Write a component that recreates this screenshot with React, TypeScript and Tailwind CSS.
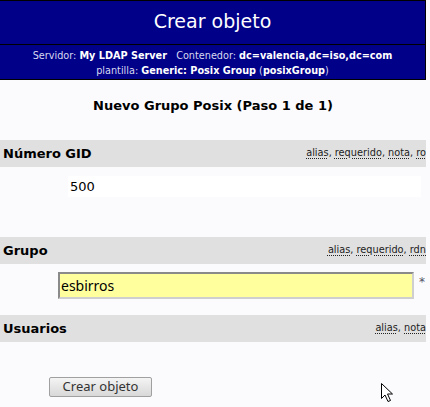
import React from "react";

const FONT = { fontFamily: '"DejaVu Sans", Verdana, sans-serif' };

const Links = ({ items }: { items: string[] }) => (
  <span className="ml-auto shrink-0 whitespace-nowrap text-[9.75px] font-normal text-[#222]">
    {items.map((it, i) => (
      <span key={i}>
        <span className="underline decoration-dotted underline-offset-2">{it}</span>
        {i < items.length - 1 ? ", " : ""}
      </span>
    ))}
  </span>
);

const Bar = ({ label, links }: { label: string; links: string[] }) => (
  <div className="flex h-[27px] w-[426px] items-center overflow-hidden bg-[#e0e0e0] pl-[3px]">
    <span className="whitespace-nowrap text-[13px] font-bold text-black">{label}</span>
    <Links items={links} />
  </div>
);

const Cursor = () => (
  <svg
    className="absolute left-[380px] top-[382px]"
    width="14"
    height="22"
    viewBox="0 0 14 22"
  >
    <path
      d="M1.5 1.5 L1.5 16.5 L5 13 L8 19.5 L10.5 18.5 L7.5 12 L12.5 12 Z"
      fill="#fff"
      stroke="#000"
      strokeWidth="1"
      strokeLinejoin="round"
    />
  </svg>
);

export default function App() {
  return (
    <div className="relative h-[407px] w-[430px] overflow-hidden bg-[#fbfbfe]" style={FONT}>
      <div className="w-[426px]">
        {/* header */}
        <div className="border-b border-r border-t border-black bg-[#000088] text-white">
          <div className="flex h-[44px] items-center justify-center border-b border-black pb-[2px] text-[19px]">
            Crear objeto
          </div>
          <div className="flex h-[34px] flex-col items-center justify-center pt-[2px] text-[9.7px] leading-[15px]">
            <div className="whitespace-nowrap">
              <span className="text-[#d8d8f0]">Servidor: </span>
              <b>My LDAP Server</b>
              <span className="text-[#d8d8f0]">&nbsp;&nbsp; Contenedor: </span>
              <b>dc=valencia,dc=iso,dc=com</b>
            </div>
            <div className="whitespace-nowrap">
              <span className="text-[#d8d8f0]">plantilla: </span>
              <b>Generic: Posix Group</b>
              <span className="text-[#d8d8f0]"> (</span>
              <b>posixGroup</b>
              <span className="text-[#d8d8f0]">)</span>
            </div>
          </div>
        </div>

        <div className="h-[60px] pt-[18px] text-center text-[13px] font-bold leading-[16px] text-black">
          Nuevo Grupo Posix (Paso 1 de 1)
        </div>

        <Bar label="Número GID" links={["alias", "requerido", "nota", "ro"]} />
        <div className="mt-[9px] ml-[68px] flex h-[21px] w-[353px] items-center bg-white pl-[2px] text-[13px] text-black">
          500
        </div>

        <div className="h-[40px]" />
        <Bar label="Grupo" links={["alias", "requerido", "rdn"]} />
        <div className="mt-[8px] flex items-start">
          <div
            className="ml-[58px] flex h-[27px] w-[356px] items-center border-2 border-b-[#cfcfcf] border-l-[#8a8a8a] border-r-[#cfcfcf] border-t-[#8a8a8a] bg-[#ffff9e] pl-[1px] text-[14px] text-black"
            style={{ fontFamily: '"Noto Sans", "Open Sans", sans-serif' }}
          >
            esbirros
          </div>
          <span className="ml-[5px] mt-[1px] text-[12px] text-[#556]">*</span>
        </div>

        <div className="h-[16px]" />
        <Bar label="Usuarios" links={["alias", "nota"]} />

        <div className="ml-[49px] mt-[35px]">
          <button
            className="flex h-[20px] w-[103px] items-center justify-center rounded-[2px] border border-[#a0a0a0] bg-gradient-to-b from-[#f4f4f4] to-[#d8d8d8] text-[13px] text-[#333]"
            style={{ fontFamily: '"Noto Sans", "Open Sans", sans-serif' }}
          >
            Crear objeto
          </button>
        </div>
      </div>
      <Cursor />
    </div>
  );
}
